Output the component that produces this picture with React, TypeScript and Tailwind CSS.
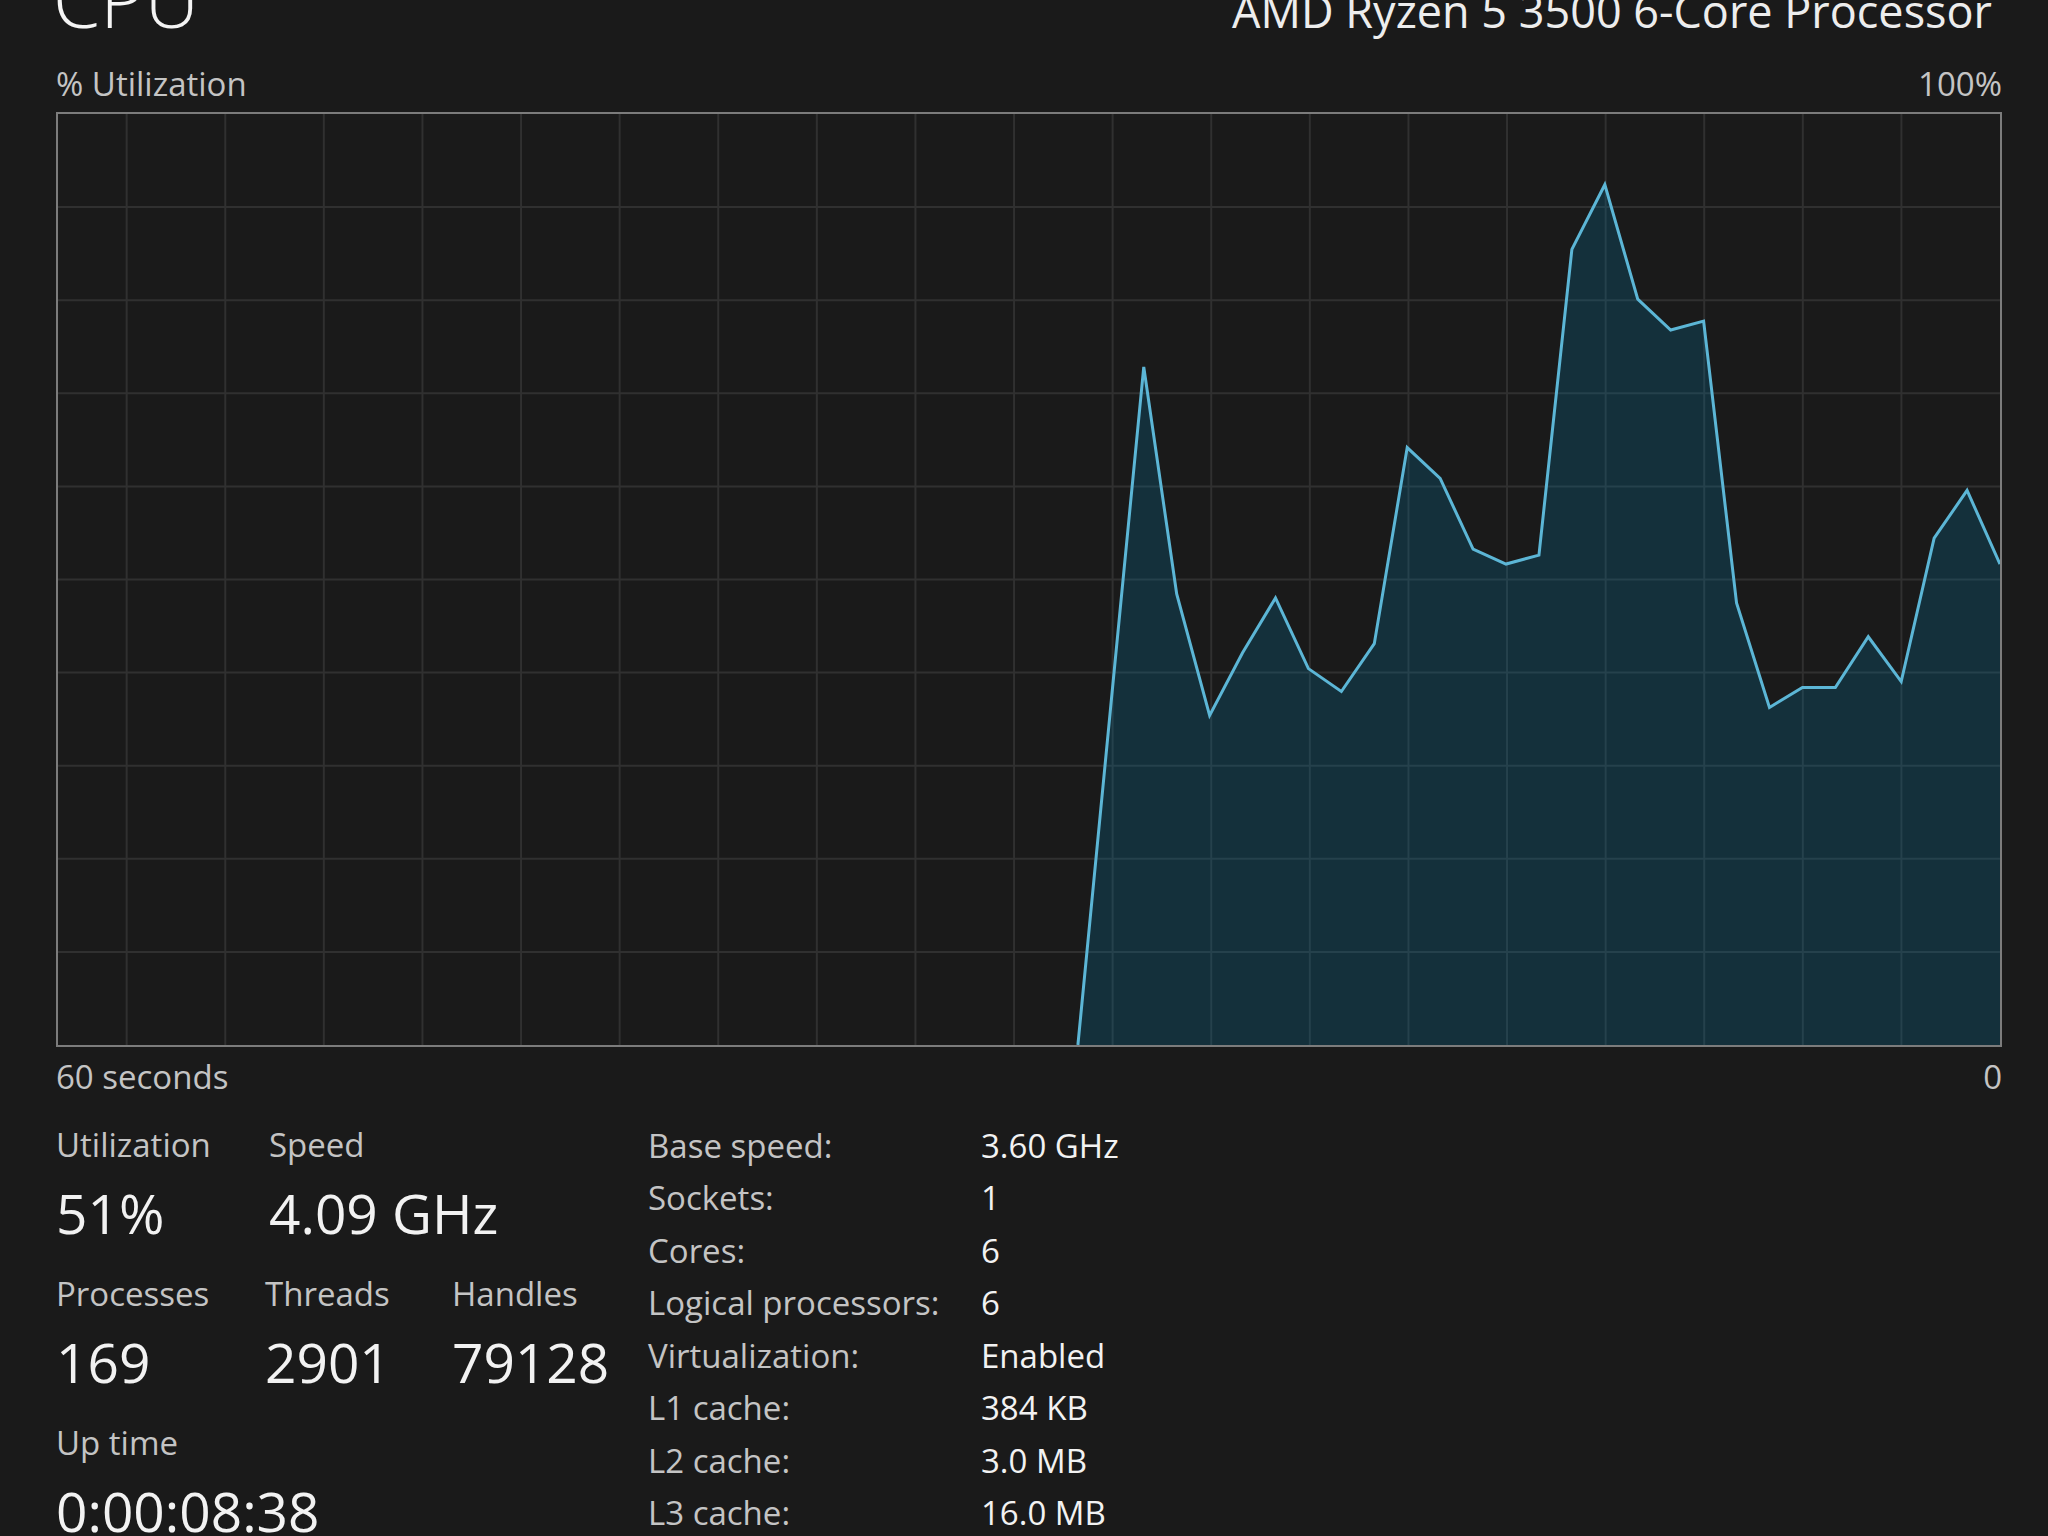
import React from 'react';

// CPU usage samples, one every second (y in chart units, 0 = 100%, 935 = 0%)
const SAMPLES = [
  935, 594, 254, 482, 604, 541, 486, 557, 580, 532, 335, 366, 437, 452, 443,
  136, 71, 186, 217, 208, 491, 596, 576, 576, 525, 570, 426, 378, 452,
];

const CHART_W = 1946;
const CHART_H = 935;
const SAMPLE_STEP = 33;
const GRID_COL = 98.8;

const SPECS: [string, string][] = [
  ['Base speed:', '3.60 GHz'],
  ['Sockets:', '1'],
  ['Cores:', '6'],
  ['Logical processors:', '6'],
  ['Virtualization:', 'Enabled'],
  ['L1 cache:', '384 KB'],
  ['L2 cache:', '3.0 MB'],
  ['L3 cache:', '16.0 MB'],
];

const UsageChart = () => {
  const pts = SAMPLES.map((y, i) => {
    const x = CHART_W - (SAMPLES.length - 1 - i) * SAMPLE_STEP;
    return `${x},${y}`;
  });
  const firstX = CHART_W - (SAMPLES.length - 1) * SAMPLE_STEP;
  const area = [`${firstX},${CHART_H}`, ...pts, `${CHART_W},${CHART_H}`].join(' ');

  const cols = Array.from({ length: 19 }, (_, k) => CHART_W - GRID_COL * (k + 1));
  const rows = Array.from({ length: 9 }, (_, k) => (CHART_H / 10) * (k + 1));

  return (
    <div className="h-[935px] w-full border-2 border-[#7c7c7c]">
      <svg
        className="block h-full w-full"
        viewBox={`0 0 ${CHART_W} ${CHART_H}`}
        preserveAspectRatio="none"
      >
        {cols.map((x) => (
          <line key={`c${x}`} x1={x} y1={0} x2={x} y2={CHART_H} stroke="#303030" strokeWidth={2} vectorEffect="non-scaling-stroke" />
        ))}
        {rows.map((y) => (
          <line key={`r${y}`} x1={0} y1={y} x2={CHART_W} y2={y} stroke="#303030" strokeWidth={2} vectorEffect="non-scaling-stroke" />
        ))}
        <polygon points={area} fill="rgb(0,128,178)" fillOpacity={0.22} />
        <polyline
          points={pts.join(' ')}
          fill="none"
          stroke="#5cb6d6"
          strokeWidth={3}
          strokeLinejoin="miter"
          vectorEffect="non-scaling-stroke"
        />
      </svg>
    </div>
  );
};

const Stat = ({ label, value, width }: { label: string; value: string; width: string }) => (
  <div className={`flex flex-col ${width}`}>
    <span className="text-[33px] leading-[40px] text-[#c4c4c4]">{label}</span>
    <span className="mt-[16px] text-[55px] leading-[64px] text-[#f2f2f2]">{value}</span>
  </div>
);

export default function App() {
  return (
    <div
      className="h-[1536px] w-[2048px] overflow-hidden bg-[#1a1a1a] pl-[56px] pr-[46px]"
      style={{ fontFamily: '"Open Sans", "Noto Sans", sans-serif' }}
    >
      {/* title row, clipped at the top edge */}
      <div className="flex h-[64px] flex-col">
        <div className="-mt-[39px] flex items-baseline justify-between pr-[10px]">
          <span className="-ml-[3px] text-[76px] font-light leading-none text-[#f4f4f4]">CPU</span>
          <span className="text-[45px] leading-none text-[#ededed]">AMD Ryzen 5 3500 6-Core Processor</span>
        </div>
      </div>

      <div className="flex justify-between text-[33px] leading-[40px] text-[#c4c4c4]">
        <span>% Utilization</span>
        <span>100%</span>
      </div>

      <div className="mt-[8px]">
        <UsageChart />
      </div>

      <div className="mt-[10px] flex justify-between text-[33px] leading-[40px] text-[#c4c4c4]">
        <span>60 seconds</span>
        <span>0</span>
      </div>

      <div className="mt-[22px] flex">
        <div className="flex w-[592px] flex-col pt-[6px]">
          <div className="flex">
            <Stat label="Utilization" value="51%" width="w-[213px]" />
            <Stat label="Speed" value="4.09 GHz" width="w-[280px]" />
          </div>
          <div className="mt-[29px] flex">
            <Stat label="Processes" value="169" width="w-[209px]" />
            <Stat label="Threads" value="2901" width="w-[187px]" />
            <Stat label="Handles" value="79128" width="w-[180px]" />
          </div>
          <div className="mt-[29px] flex">
            <Stat label="Up time" value="0:00:08:38" width="w-[400px]" />
          </div>
        </div>

        <div className="flex flex-col">
          {SPECS.map(([k, v]) => (
            <div key={k} className="flex h-[52.5px] items-center text-[33px]">
              <span className="w-[333px] text-[#c4c4c4]">{k}</span>
              <span className="text-[#f2f2f2]">{v}</span>
            </div>
          ))}
        </div>
      </div>
    </div>
  );
}
